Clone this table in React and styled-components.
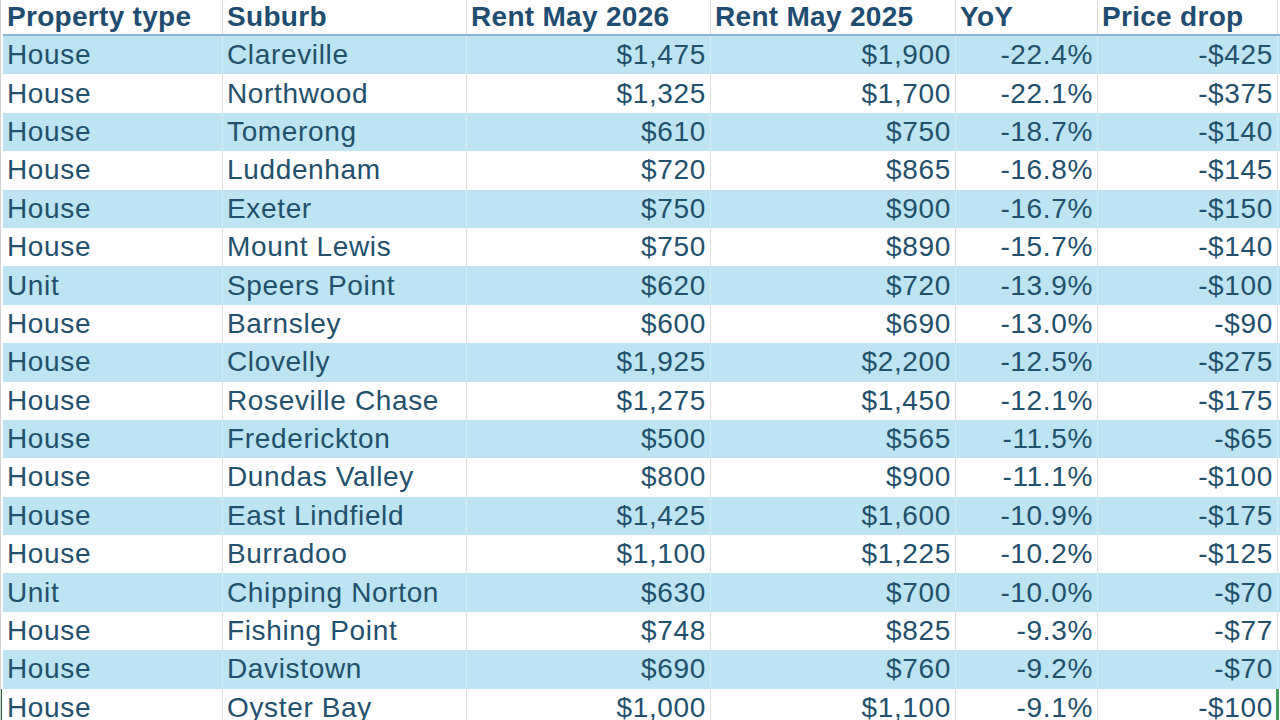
// rent drops table - spreadsheet style listing of suburbs with falling rents
import styled, { createGlobalStyle } from 'styled-components';

const GlobalStyle = createGlobalStyle`
    html, body {
        margin: 0;
        padding: 0;
        background: #ffffff;
    }
    body {
        font-family: "Liberation Sans", Arial, sans-serif;
        overflow: hidden;
    }
`;

const COLUMNS = '220px 244px 244px 245px 142px 180px';

const Sheet = styled.div`
    width: 1280px;
    height: 720px;
    padding-left: 2px;
    box-sizing: border-box;
    border-left: 1px solid #d4d4d4;
    overflow: hidden;
    background: #ffffff;
`;

const HeaderRow = styled.div`
    display: grid;
    grid-template-columns: ${COLUMNS};
    height: 34px;
    border-bottom: 2px solid #8db3d3;
`;

const HeadCell = styled.div`
    display: flex;
    align-items: center;
    padding: 0 4px;
    font-size: 28px;
    font-weight: 700;
    color: #1f4d72;
    white-space: nowrap;
    border-right: 1px solid #dcdcdc;
    letter-spacing: 0.3px;
`;

const Row = styled.div`
    position: relative;
    display: grid;
    grid-template-columns: ${COLUMNS};
    height: 38.4px;
    background: ${(p) => (p.$alt ? '#bee3f3' : '#ffffff')};
`;

const Cell = styled.div`
    display: flex;
    align-items: center;
    justify-content: ${(p) => (p.$num ? 'flex-end' : 'flex-start')};
    padding: 0 4px;
    font-size: 28px;
    letter-spacing: 0.65px;
    color: #23506c;
    white-space: nowrap;
    border-right: 1px solid ${(p) => (p.$alt ? '#d3edf8' : '#dedede')};
`;

// the selected row in the sheet shows a green outline at its edges
const Selection = styled.div`
    position: absolute;
    top: 0;
    bottom: -4px;
    left: -3px;
    right: 1px;
    border-left: 2px solid #21603a;
    border-right: 3px solid #3f9b5a;
    pointer-events: none;
`;

const headers = ['Property type', 'Suburb', 'Rent May 2026', 'Rent May 2025', 'YoY', 'Price drop'];

const rows = [
    ['House', 'Clareville', '$1,475', '$1,900', '-22.4%', '-$425'],
    ['House', 'Northwood', '$1,325', '$1,700', '-22.1%', '-$375'],
    ['House', 'Tomerong', '$610', '$750', '-18.7%', '-$140'],
    ['House', 'Luddenham', '$720', '$865', '-16.8%', '-$145'],
    ['House', 'Exeter', '$750', '$900', '-16.7%', '-$150'],
    ['House', 'Mount Lewis', '$750', '$890', '-15.7%', '-$140'],
    ['Unit', 'Speers Point', '$620', '$720', '-13.9%', '-$100'],
    ['House', 'Barnsley', '$600', '$690', '-13.0%', '-$90'],
    ['House', 'Clovelly', '$1,925', '$2,200', '-12.5%', '-$275'],
    ['House', 'Roseville Chase', '$1,275', '$1,450', '-12.1%', '-$175'],
    ['House', 'Frederickton', '$500', '$565', '-11.5%', '-$65'],
    ['House', 'Dundas Valley', '$800', '$900', '-11.1%', '-$100'],
    ['House', 'East Lindfield', '$1,425', '$1,600', '-10.9%', '-$175'],
    ['House', 'Burradoo', '$1,100', '$1,225', '-10.2%', '-$125'],
    ['Unit', 'Chipping Norton', '$630', '$700', '-10.0%', '-$70'],
    ['House', 'Fishing Point', '$748', '$825', '-9.3%', '-$77'],
    ['House', 'Davistown', '$690', '$760', '-9.2%', '-$70'],
    ['House', 'Oyster Bay', '$1,000', '$1,100', '-9.1%', '-$100'],
];

function App() {
    return (
        <>
            <GlobalStyle />
            <Sheet>
                <HeaderRow>
                    {headers.map((h) => (
                        <HeadCell key={h}>{h}</HeadCell>
                    ))}
                </HeaderRow>

                {rows.map((row, i) => {
                    const alt = i % 2 === 0;
                    return (
                        <Row key={row[1]} $alt={alt}>
                            {row.map((value, c) => (
                                <Cell key={c} $alt={alt} $num={c > 1}>
                                    {value}
                                </Cell>
                            ))}
                            {i === rows.length - 1 && <Selection />}
                        </Row>
                    );
                })}
            </Sheet>
        </>
    );
}

export default App;
